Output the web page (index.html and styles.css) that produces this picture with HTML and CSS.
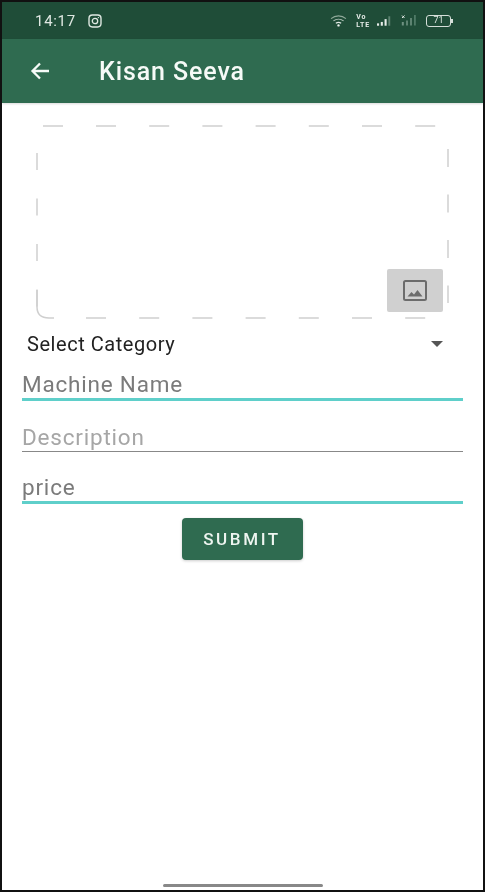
FILE: index.html
```html
<!DOCTYPE html>
<html lang="en">
<head>
<meta charset="utf-8">
<title>Kisan Seeva</title>
<link rel="stylesheet" href="styles.css">
</head>
<body>
<div class="frame">
  <header class="status">
    <div class="status-left">
      <span class="time">14:17</span>
      <svg class="ig" viewBox="0 0 14 14" width="14" height="14"><rect x="1" y="1" width="12" height="12" rx="3.4" fill="none" stroke="currentColor" stroke-width="1.4"/><circle cx="7" cy="7" r="2.7" fill="none" stroke="currentColor" stroke-width="1.3"/><circle cx="10.4" cy="3.6" r=".7" fill="currentColor"/></svg>
    </div>
    <div class="status-right">
      <svg class="wifi" viewBox="0 0 16 12" width="17" height="13"><path d="M1 4.2C5 .8 11 .8 15 4.2" fill="none" stroke="#8fa899" stroke-width="1"/><path d="M3.2 6.4C6 4.2 10 4.2 12.8 6.4" fill="none" stroke="#b4c6bb" stroke-width="1"/><path d="M5.5 8.6C7 7.5 9 7.5 10.5 8.6" fill="none" stroke="#e2eae5" stroke-width="1.1"/><circle cx="8" cy="10.6" r="1.1" fill="#f2f6f3"/></svg>
      <span class="volte"><span>Vo</span><span>LTE</span></span>
      <svg class="sig" viewBox="0 0 18 12" width="17" height="12"><rect x="0" y="8.500" width="2.200" height="2.500" fill="#e6ece8"/><rect x="4" y="7" width="2.200" height="4" fill="#e6ece8"/><rect x="8" y="4" width="2.200" height="7" fill="#e6ece8"/><rect x="12" y="1" width="2" height="10" fill="#5d8371"/></svg>
      <svg class="sig2" viewBox="0 0 18 13" width="18" height="13"><path d="M1 1.500l2.500 2.500M3.500 1.500L1 4" stroke="#dfe7e2" stroke-width="1"/><rect x="0.800" y="8" width="2" height="3.500" fill="#6f9282"/><rect x="5" y="6.500" width="2" height="5" fill="#5d8371"/><rect x="9" y="4" width="2" height="7.500" fill="#5d8371"/><rect x="13" y="1" width="1.800" height="10.500" fill="#4f7a66"/></svg>
      <span class="battery"><span class="battery-body">71</span><span class="battery-tip"></span></span>
    </div>
  </header>
  <div class="appbar">
    <svg class="back" viewBox="0 0 24 24" width="24" height="24"><path d="M21 12H5M12 4.500L4.500 12l7.500 7.500" fill="none" stroke="currentColor" stroke-width="2.300"/></svg>
    <h1 class="title">Kisan Seeva</h1>
  </div>
  <main class="content">
    <div class="drop">
      <svg class="drop-lines" viewBox="0 0 413 194" width="413" height="194">
        <g fill="none" stroke="#cfcfcf" stroke-width="1.500">
          <path d="M7 1H27"/>
          <path d="M60 1H403" stroke-dasharray="20 33.200"/>
          <path d="M1 28V182" stroke-dasharray="17 28.500"/>
          <path d="M1 165V182Q1 193 13 193H18"/>
          <path d="M50 193H392" stroke-dasharray="20 33.200"/>
          <path d="M412 24V178" stroke-dasharray="18 27.500"/>
        </g>
      </svg>
      <button class="pick" type="button" aria-label="Pick image">
        <svg viewBox="0 0 24 21" width="24" height="21"><rect x="1" y="1" width="22" height="19" rx="1.500" fill="none" stroke="#6c6c6c" stroke-width="2"/><path d="M4.500 16.500l4-4.500 2.500 2.500 3.500-4.500 5 6.500z" fill="#6c6c6c"/></svg>
      </button>
    </div>
    <div class="select">
      <span>Select Category</span>
      <span class="caret"></span>
    </div>
    <div class="field field-active"><span class="label">Machine Name</span></div>
    <div class="field"><span class="label label-muted">Description</span></div>
    <div class="field field-active field-last"><span class="label">price</span></div>
    <button class="submit" type="button">SUBMIT</button>
  </main>
  <div class="home"></div>
</div>
</body>
</html>
```
FILE: styles.css
```css
* { box-sizing: border-box; }
html, body { margin: 0; padding: 0; background: #fff; }
body { font-family: Roboto, "Liberation Sans", sans-serif; }

.frame {
  width: 485px;
  height: 892px;
  border: 2px solid #111;
  display: flex;
  flex-direction: column;
  background: #fff;
  overflow: hidden;
}
.frame > * { filter: blur(0.35px); }

.status {
  height: 37px;
  background: #1f4d38;
  color: #dfe8e2;
  display: flex;
  justify-content: space-between;
  align-items: center;
  padding: 0 30px 0 33px;
  flex: none;
}
.status-left, .status-right { display: flex; align-items: center; }
.time { font-size: 15px; letter-spacing: 0.7px; margin-right: 12px; }
.status-right { gap: 7px; }
.wifi { margin-right: 2px; }
.volte { display: flex; flex-direction: column; font-size: 7px; line-height: 8px; font-weight: 700; letter-spacing: 0.8px; color: #e6ece8; }
.battery { display: flex; align-items: center; }
.battery-body {
  width: 25px;
  height: 12px;
  border: 1.300px solid #d5dfd9;
  border-radius: 3px;
  font-size: 9px;
  line-height: 9.500px;
  text-align: center;
  color: #dfe8e2;
}
.battery-tip { width: 2px; height: 4px; background: #d5dfd9; }

.appbar {
  height: 64px;
  flex: none;
  background: #2f6b50;
  color: #f6faf7;
  display: flex;
  align-items: center;
  padding: 0 0 0 26px;
  box-shadow: 0 1px 2px rgba(0,0,0,.15);
}
.title { margin: 0 0 0 47px; font-size: 25px; font-weight: 500; letter-spacing: 0.9px; }

.content { flex: 1; display: flex; flex-direction: column; padding: 22px 20px 0; }

.drop { position: relative; width: 413px; height: 194px; margin-left: 14px; flex: none; }
.drop-lines { display: block; }
.pick {
  position: absolute;
  left: 351px;
  top: 144px;
  width: 56px;
  height: 43px;
  padding: 0;
  border: 0;
  border-radius: 2px;
  background: #d0d0d0;
  display: flex;
  align-items: center;
  justify-content: center;
}

.select {
  display: flex;
  justify-content: space-between;
  align-items: center;
  height: 24px;
  margin-top: 13px;
  padding: 0 20px 0 5px;
  font-size: 20px;
  color: #222;
  letter-spacing: 0.55px;
}
.caret { width: 0; height: 0; border: 6.500px solid transparent; border-top: 6px solid #555; border-bottom: 0; }

.field {
  width: 441px;
  height: 37px;
  margin-top: 14px;
  border-bottom: 1.500px solid #888;
  display: flex;
  align-items: flex-end;
  padding-bottom: 0;
}
.select + .field { margin-top: 8px; }
.field-last { margin-top: 15px; }
.field-active { border-bottom: 3px solid #5fcfca; }
.label { font-size: 22.500px; line-height: 28px; color: #7b7b7b; letter-spacing: 0.8px; }
.label-muted { color: #a6a6a6; }

.submit {
  align-self: center;
  width: 121px;
  height: 42px;
  margin-top: 14px;
  margin-left: -1px;
  border: 0;
  border-radius: 4px;
  background: #2f6b50;
  color: #eef5f0;
  font-family: inherit;
  font-size: 17px;
  font-weight: 500;
  letter-spacing: 2.600px;
  box-shadow: 0 1px 3px rgba(0,0,0,.2);
}

.home {
  align-self: flex-start;
  width: 160px;
  height: 3px;
  margin: 0 0 3px 161px;
  border-radius: 2px;
  background: #888;
}
```
